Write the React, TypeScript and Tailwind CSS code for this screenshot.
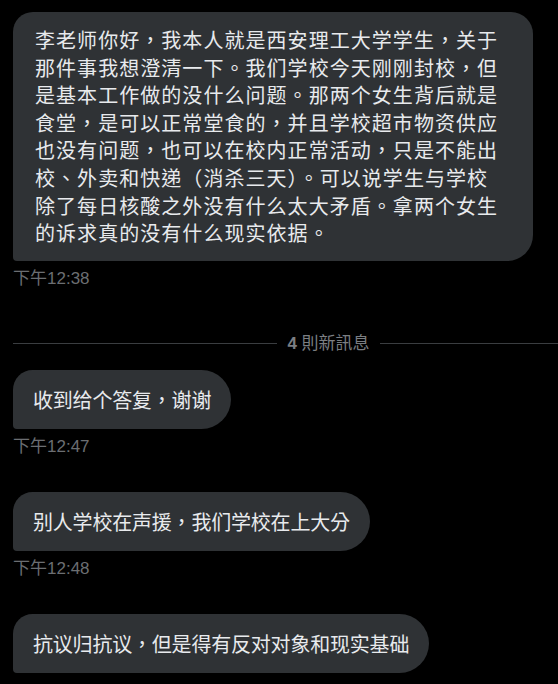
const cjk = { fontFamily: '"Noto Sans CJK TC", "Noto Sans CJK SC", sans-serif' };

const longLines = [
  '李老师你好，我本人就是西安理工大学学生，关于',
  '那件事我想澄清一下。我们学校今天刚刚封校，但',
  '是基本工作做的没什么问题。那两个女生背后就是',
  '食堂，是可以正常堂食的，并且学校超市物资供应',
  '也没有问题，也可以在校内正常活动，只是不能出',
  '校、外卖和快递（消杀三天）。可以说学生与学校',
  '除了每日核酸之外没有什么太大矛盾。拿两个女生',
  '的诉求真的没有什么现实依据。',
];

function Time({ children }: { children: string }) {
  return (
    <div
      className="mt-[8px] text-[17px] leading-[20px] text-[#6b6e72]"
      style={{ fontFamily: '"Liberation Sans", "Noto Sans CJK TC", sans-serif' }}
    >
      {children}
    </div>
  );
}

function Bubble({ text, className = '' }: { text: string; className?: string }) {
  return (
    <div
      lang="zh-Hant"
      className={`self-start whitespace-nowrap rounded-tl-[20px] rounded-r-[30px] rounded-bl-[4px] bg-[#2f3235] px-[20px] py-[16px] text-[20px] leading-[27px] tracking-[-0.2px] text-[#e8eaed] ${className}`}
      style={cjk}
    >
      {text}
    </div>
  );
}

export default function App() {
  return (
    <div lang="zh-Hant" className="min-h-screen overflow-hidden bg-black pl-[13px] pt-[12px]">
      <div className="flex w-[631px] flex-col">
        {/* 长消息 */}
        <div
          className="w-[520px] rounded-tl-[20px] rounded-tr-[22px] rounded-br-[26px] rounded-bl-[4px] bg-[#2f3235] px-[22px] pt-[14px] pb-[14px] text-[20px] leading-[27.6px] tracking-[1.05px] text-[#e8eaed]"
          style={cjk}
        >
          {longLines.map((l) => (
            <div key={l} className="whitespace-nowrap">
              {l}
            </div>
          ))}
        </div>
        <Time>下午12:38</Time>

        {/* 新消息分隔 */}
        <div className="mt-[45px] flex h-[20px] items-center gap-[10px]">
          <div className="h-px flex-1 bg-[#3a3d40]" />
          <div
            className="text-[17px] leading-[20px] text-[#7b7e82]"
            style={{ fontFamily: '"Liberation Sans", "Noto Sans CJK TC", sans-serif' }}
          >
            <span className="font-bold">4</span> 則新訊息
          </div>
          <div className="h-px flex-1 bg-[#3a3d40]" />
        </div>

        <Bubble text="收到给个答复，谢谢" className="mt-[16px]" />
        <Time>下午12:47</Time>

        <Bubble text="别人学校在声援，我们学校在上大分" className="mt-[35px]" />
        <Time>下午12:48</Time>

        <Bubble text="抗议归抗议，但是得有反对对象和现实基础" className="mt-[35px]" />
      </div>
    </div>
  );
}
